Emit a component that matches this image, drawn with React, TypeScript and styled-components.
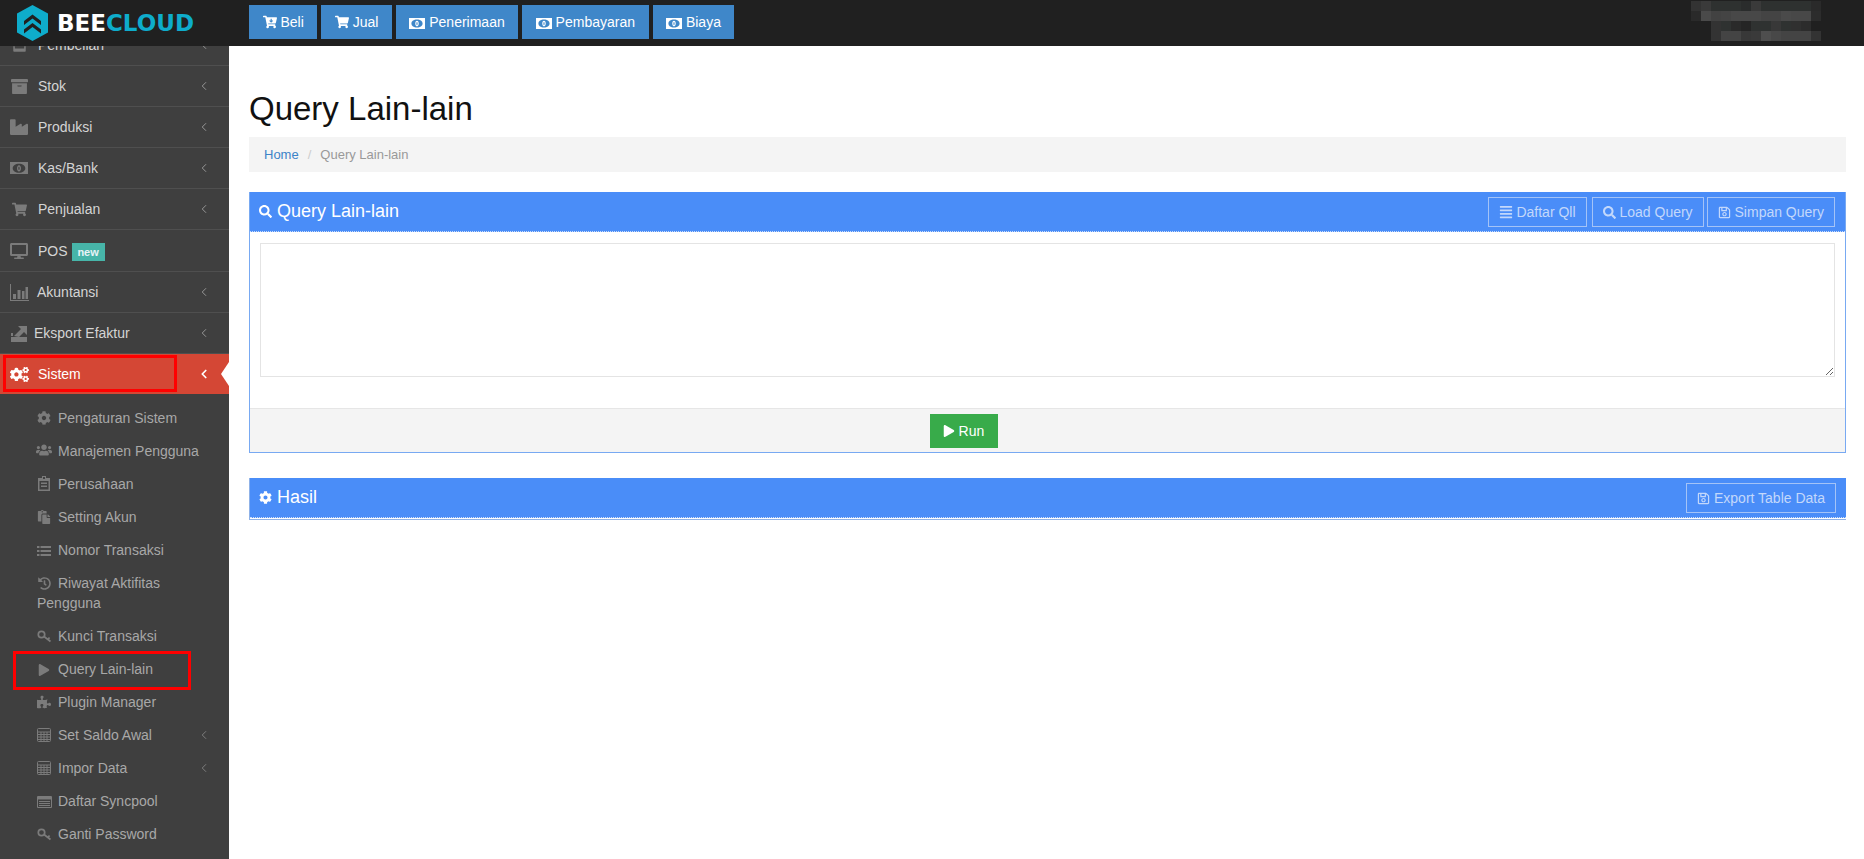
import React from "react";
import styled, { createGlobalStyle } from "styled-components";
import { ChevronLeft } from "lucide-react";
import {
  FaAlignJustify,
  FaArchive,
  FaCartArrowDown,
  FaCog,
  FaCogs,
  FaDesktop,
  FaHistory,
  FaIndustry,
  FaPaste,
  FaPlay,
  FaPuzzlePiece,
  FaRegSave,
  FaSearch,
  FaShoppingCart,
  FaStore,
  FaUsers,
} from "react-icons/fa";

const GlobalStyle = createGlobalStyle`
  html, body {
    margin: 0;
    height: 100%;
    overflow: hidden;
    background: #fff;
    font-family: "Liberation Sans", Arial, sans-serif;
    font-size: 14px;
    color: #333;
  }
  * { box-sizing: border-box; }
`;

const ExportIcon = () => (
  <svg width="22" height="20" viewBox="0 0 22 20" fill="currentColor">
    <path d="M3 14h16v5H3z" />
    <path d="M6 13 13 6 10 3h9v9l-3-3-5 5z" />
    <path d="M3 10h2v3H3z" />
  </svg>
);

const MoneyIcon = ({ w = 16 }: { w?: number }) => (
  <svg width={w} height={(w * 14) / 20} viewBox="0 0 20 14" fill="currentColor">
    <path
      fillRule="evenodd"
      d="M0 0h20v14H0zM10 2C6 2 3 4 3 7s3 5 7 5 7-2 7-5-3-5-7-5z"
    />
    <path
      fillRule="evenodd"
      d="M10 3.500c1.400 0 2.200 1.500 2.200 3.500s-.8 3.500-2.200 3.500S7.800 9 7.800 7s.8-3.500 2.200-3.500zM10 5c-.4 0-.7.8-.7 2s.3 2 .7 2 .7-.8.7-2-.3-2-.7-2z"
    />
  </svg>
);

const ChartIcon = () => (
  <svg width="19" height="17" viewBox="0 0 19 17" fill="currentColor">
    <path d="M0 0h1v16h18v1H0z" />
    <path d="M3 10h3v5H3zM7.500 6h3v9h-3zM12 7h2.500v8H12zM15.500 3H18v12h-2.500z" />
  </svg>
);

const KeyIcon = () => (
  <svg width="15" height="13" viewBox="0 0 15 13" fill="none" stroke="currentColor" strokeWidth="1.700">
    <circle cx="4.500" cy="4.500" r="3.200" />
    <path d="M7 6.500 13.500 11.500M11 9.500l1.500-2" />
  </svg>
);

const ClipboardIcon = () => (
  <svg width="12" height="15" viewBox="0 0 12 15" fill="currentColor">
    <path
      fillRule="evenodd"
      d="M4 0h4v2h4v13H0V2h4zM5 1v2h2V1zM1.500 5v8.500h9V5z"
    />
    <path d="M3 6.500h6v1.500H3zM3 9.500h6V11H3z" />
  </svg>
);

const CalcIcon = () => (
  <svg width="14" height="14" viewBox="0 0 14 14" fill="none" stroke="currentColor">
    <rect x="0.500" y="0.500" width="13" height="13" rx="1" />
    <path d="M.5 4h13M.5 6.500h13M.5 9h13M.5 11.500h13M4 4v9.500M7 4v9.500M10 4v9.500" />
  </svg>
);

const ListAltIcon = () => (
  <svg width="15" height="12" viewBox="0 0 15 12" fill="currentColor">
    <path
      fillRule="evenodd"
      d="M0 1a1 1 0 0 1 1-1h13a1 1 0 0 1 1 1v10a1 1 0 0 1-1 1H1a1 1 0 0 1-1-1zM1 3.500V11h13V3.500z"
    />
    <path d="M2 5h11v1H2zM2 7h11v1H2zM2 9h11v1H2z" />
  </svg>
);

const ListIcon = () => (
  <svg width="14" height="12" viewBox="0 0 14 12" fill="currentColor">
    <path d="M0 1h2.500v2H0zM3.500 1H14v2H3.500zM0 5h2.500v2H0zM3.500 5H14v2H3.500zM0 9h2.500v2H0zM3.500 9H14v2H3.500z" />
  </svg>
);

const topButtons = [
  { label: "Beli", icon: <FaCartArrowDown /> },
  { label: "Jual", icon: <FaShoppingCart /> },
  { label: "Penerimaan", icon: <MoneyIcon /> },
  { label: "Pembayaran", icon: <MoneyIcon /> },
  { label: "Biaya", icon: <MoneyIcon /> },
];

const mainMenu = [
  { label: "Pembelian", icon: <FaStore size={15} />, textX: 38 },
  { label: "Stok", icon: <FaArchive size={17} />, textX: 38 },
  { label: "Produksi", icon: <FaIndustry size={18} />, textX: 38 },
  { label: "Kas/Bank", icon: <MoneyIcon w={18} />, textX: 38 },
  { label: "Penjualan", icon: <FaShoppingCart size={15} />, textX: 38 },
  { label: "POS", icon: <FaDesktop size={18} />, textX: 38, badge: "new", tall: true },
  { label: "Akuntansi", icon: <ChartIcon />, textX: 37 },
  { label: "Eksport Efaktur", icon: <ExportIcon />, textX: 34 },
];

const subMenu = [
  { label: "Pengaturan Sistem", icon: <FaCog /> },
  { label: "Manajemen Pengguna", icon: <FaUsers size={16} /> },
  { label: "Perusahaan", icon: <ClipboardIcon /> },
  { label: "Setting Akun", icon: <FaPaste /> },
  { label: "Nomor Transaksi", icon: <ListIcon /> },
  { label: "Riwayat Aktifitas Pengguna", icon: <FaHistory size={13} /> },
  { label: "Kunci Transaksi", icon: <KeyIcon /> },
  { label: "Query Lain-lain", icon: <FaPlay size={12} />, marked: true },
  { label: "Plugin Manager", icon: <FaPuzzlePiece /> },
  { label: "Set Saldo Awal", icon: <CalcIcon />, arrow: true },
  { label: "Impor Data", icon: <CalcIcon />, arrow: true },
  { label: "Daftar Syncpool", icon: <ListAltIcon /> },
  { label: "Ganti Password", icon: <KeyIcon /> },
];

const mosaic = [
  [1691, 1, "#333", "#3a3a3a", "#2e3130", "#2e3130", "#2e3130", "#2a2c2c", "#3a3a3a", "#2e3130", "#2e3130", "#2e3130", "#2e3130", "#2e3130", "#2a2a2a"],
  [1691, 11, "#2a2a2a", "#4a4a4a", "#424242", "#444", "#484848", "#484848", "#484848", "#444", "#444", "#4a4a4a", "#484848", "#484848", "#2c2c2c"],
  [1711, 21, "#333", "#2f3231", "#2a2a2a", "#252525", "#2f3231", "#2f3231", "#383838", "#2f3231", "#303030", "#2c2c2c"],
  [1711, 31, "#333", "#444", "#444", "#383838", "#3a3a3a", "#4e4e4e", "#484848", "#444", "#444", "#444", "#333"],
] as const;

function Mosaic() {
  return (
    <MosaicSvg width="130" height="40" viewBox="1691 1 130 40">
      {mosaic.map(([x, y, ...cells]) =>
        cells.map((fill, i) => (
          <rect key={`${y}-${i}`} x={x + i * 10} y={y} width="10" height="10" fill={fill} />
        ))
      )}
    </MosaicSvg>
  );
}

function App() {
  return (
    <Page>
      <GlobalStyle />
      <Header>
        <Logo>
          <svg width="33" height="36" viewBox="0 0 33 36">
            <path d="M16.5 0 32 8.5v19L16.5 36 1 27.500v-19z" fill="#0eaccb" />
            <path d="M8 16 16.500 9.500 25 16v4l-8.500-6.500L8 20z" fill="#202020" />
            <path d="M8 24.500 16.500 18 25 24.500v4L16.500 22 8 28.500z" fill="#202020" />
          </svg>
          <LogoText>
            BEE<span>CLOUD</span>
          </LogoText>
        </Logo>
        <TopButtons>
          {topButtons.map((b) => (
            <TopButton key={b.label}>
              {b.icon} {b.label}
            </TopButton>
          ))}
        </TopButtons>
        <Mosaic />
      </Header>
      <Body>
        <Sidebar>
          <Nav>
            {mainMenu.map((m) => (
              <MenuRow key={m.label} $tall={m.tall}>
                <MenuIcon>{m.icon}</MenuIcon>
                <MenuLabel $x={m.textX}>
                  {m.label}
                  {m.badge && <Badge>{m.badge}</Badge>}
                </MenuLabel>
                {!m.badge && <Arrow size={14} strokeWidth={1} />}
              </MenuRow>
            ))}
            <ActiveRow>
              <ActiveMark />
              <MenuIcon>
                <FaCogs size={19} />
              </MenuIcon>
              <MenuLabel $x={38}>Sistem</MenuLabel>
              <Arrow size={14} strokeWidth={3} />
            </ActiveRow>
            <SubList>
              {subMenu.map((s) => (
                <SubItem key={s.label}>
                  {s.marked && <QueryMark />}
                  <SubIcon>{s.icon}</SubIcon>
                  {s.label}
                  {s.arrow && <SubArrow size={14} strokeWidth={1} />}
                </SubItem>
              ))}
            </SubList>
          </Nav>
        </Sidebar>
        <Main>
          <Title>Query Lain-lain</Title>
          <Breadcrumb>
            <a>Home</a>
            <Slash>/</Slash>
            <span>Query Lain-lain</span>
          </Breadcrumb>
          <Panel>
            <PanelHeader>
              <PanelTitle>
                <FaSearch size={13} /> Query Lain-lain
              </PanelTitle>
              <PanelActions>
                <GhostButton>
                  <FaAlignJustify size={14} /> Daftar Qll
                </GhostButton>
                <GhostButton>
                  <FaSearch size={13} /> Load Query
                </GhostButton>
                <GhostButton $tight>
                  <FaRegSave size={13} /> Simpan Query
                </GhostButton>
              </PanelActions>
            </PanelHeader>
            <PanelBody>
              <QueryInput />
            </PanelBody>
            <PanelFooter>
              <RunButton>
                <FaPlay size={12} /> Run
              </RunButton>
            </PanelFooter>
          </Panel>
          <ResultPanel>
            <PanelHeader>
              <PanelTitle>
                <FaCog size={13} /> Hasil
              </PanelTitle>
              <PanelActions>
                <GhostButton>
                  <FaRegSave size={13} /> Export Table Data
                </GhostButton>
              </PanelActions>
            </PanelHeader>
          </ResultPanel>
        </Main>
      </Body>
    </Page>
  );
}

const Page = styled.div`
  height: 859px;
  display: flex;
  flex-direction: column;
`;

const Header = styled.header`
  height: 46px;
  flex: none;
  background: #202020;
  display: flex;
  align-items: center;
  position: relative;
  z-index: 2;
`;

const Logo = styled.div`
  width: 249px;
  padding-left: 16px;
  display: flex;
  align-items: center;
  gap: 8px;
`;

const LogoText = styled.div`
  font-family: "DejaVu Sans", sans-serif;
  font-weight: 700;
  font-size: 23px;
  color: #fff;

  span {
    color: #0eaccb;
  }
`;

const TopButtons = styled.div`
  display: flex;
  gap: 4px;
  flex: 1;
`;

const TopButton = styled.button`
  height: 34px;
  margin-top: -2px;
  padding: 0 13.5px;
  border: 0;
  background: #3f87c9;
  color: #fff;
  font: 14px "Liberation Sans", Arial, sans-serif;

  svg {
    vertical-align: -2px;
  }
`;

const MosaicSvg = styled.svg`
  margin-right: 43px;
  margin-top: -4px;
`;

const Body = styled.div`
  flex: 1;
  display: flex;
  min-height: 0;
`;

const Sidebar = styled.aside`
  width: 229px;
  flex: none;
  background: #3f3f3f;
  overflow: hidden;
`;

const Nav = styled.nav`
  margin-top: -21px;
`;

const MenuRow = styled.div<{ $tall?: boolean }>`
  height: ${(p) => (p.$tall ? 42 : 41)}px;
  display: flex;
  align-items: center;
  border-bottom: 1px solid #4f4f4f;
  color: #d4d4d4;
  position: relative;
`;

const MenuIcon = styled.span`
  position: absolute;
  left: 8px;
  width: 22px;
  display: flex;
  justify-content: center;
  color: #7b7b7b;
`;

const MenuLabel = styled.span<{ $x: number }>`
  padding-left: ${(p) => p.$x}px;
  flex: 1;
  display: flex;
  align-items: center;
`;

const Badge = styled.span`
  margin-left: 4px;
  width: 33px;
  height: 18px;
  margin-top: 2px;
  background: #47b5a9;
  color: #e8f3f6;
  font-size: 11px;
  font-weight: 700;
  display: flex;
  align-items: center;
  justify-content: center;
`;

const Arrow = styled(ChevronLeft)`
  margin-right: 18px;
  flex: none;
`;

const ActiveRow = styled.div`
  height: 40px;
  display: flex;
  align-items: center;
  background: #d44735;
  color: #fff;
  position: relative;

  ${MenuIcon} {
    color: #fff;
  }

  &::after {
    content: "";
    position: absolute;
    right: 0;
    top: 8px;
    border: 12px solid transparent;
    border-left-width: 0;
    border-right: 8px solid #fff;
  }
`;

const ActiveMark = styled.span`
  position: absolute;
  left: 3px;
  top: 1px;
  width: 174px;
  height: 37px;
  border: 3px solid #f00;
`;

const SubList = styled.div`
  padding-top: 7px;
`;

const SubItem = styled.div`
  position: relative;
  padding: 6.5px 15px 6.5px 37px;
  line-height: 20px;
  color: #a8a8a8;
`;

const SubIcon = styled.span`
  display: inline-flex;
  justify-content: center;
  width: 16px;
  margin: 0 6px 0 -1px;
  color: #7b7b7b;
  vertical-align: -2px;
`;

const SubArrow = styled(ChevronLeft)`
  position: absolute;
  right: 18px;
  top: 10px;
`;

const QueryMark = styled.span`
  position: absolute;
  left: 13px;
  top: -1px;
  width: 178px;
  height: 39px;
  border: 3px solid #f00;
`;

const Main = styled.main`
  flex: 1;
  min-width: 0;
  padding: 40px 18px 0 20px;
`;

const Title = styled.h1`
  margin: 0;
  height: 51px;
  line-height: 46px;
  font-size: 33px;
  font-weight: 400;
  color: #111;
`;

const Breadcrumb = styled.div`
  height: 35px;
  background: #f4f4f4;
  padding: 0 15px;
  display: flex;
  align-items: center;
  font-size: 13px;
  color: #999;

  a {
    color: #3c83c8;
  }
`;

const Slash = styled.span`
  margin: 0 9px;
  color: #ccc;
`;

const Panel = styled.section`
  margin-top: 20px;
  border: 1px solid #78a9f2;
  border-top: 0;
`;

const ResultPanel = styled.section`
  margin-top: 25px;
  padding-bottom: 1px;
  border-left: 1px solid #8fb2e8;
  border-bottom: 1px solid #8fb2e8;
`;

const PanelHeader = styled.div`
  height: 40px;
  background: #4a8df8;
  border-bottom: 1px dotted #c9dcfb;
  padding: 0 10px 0 9px;
  display: flex;
  align-items: center;
  justify-content: space-between;
`;

const PanelTitle = styled.h3`
  margin: 0;
  font-size: 18px;
  font-weight: 400;
  color: #fff;

  svg {
    vertical-align: -1px;
  }
`;

const PanelActions = styled.div`
  display: flex;
  gap: 5px;
`;

const GhostButton = styled.button<{ $tight?: boolean }>`
  height: 30px;
  padding: 0 10px;
  margin-left: ${(p) => (p.$tight ? -2 : 0)}px;
  border: 1px solid #a4c3f7;
  background: transparent;
  color: #c3d8fb;
  font: 14px "Liberation Sans", Arial, sans-serif;

  svg {
    vertical-align: -2px;
  }
`;

const PanelBody = styled.div`
  padding: 11px 10px 31px;
`;

const QueryInput = styled.textarea`
  display: block;
  width: 100%;
  height: 134px;
  border: 1px solid #e4e4e4;
  outline: 0;
  resize: vertical;
`;

const PanelFooter = styled.div`
  height: 44px;
  background: #f4f4f4;
  border-top: 1px solid #e6e6e6;
  display: flex;
  justify-content: center;
  padding-top: 5px;
`;

const RunButton = styled.button`
  width: 68px;
  height: 34px;
  margin-right: 168px;
  border: 0;
  background: #38ab4a;
  color: #fff;
  font: 14px "Liberation Sans", Arial, sans-serif;

  svg {
    vertical-align: -1px;
  }
`;

export default App;
